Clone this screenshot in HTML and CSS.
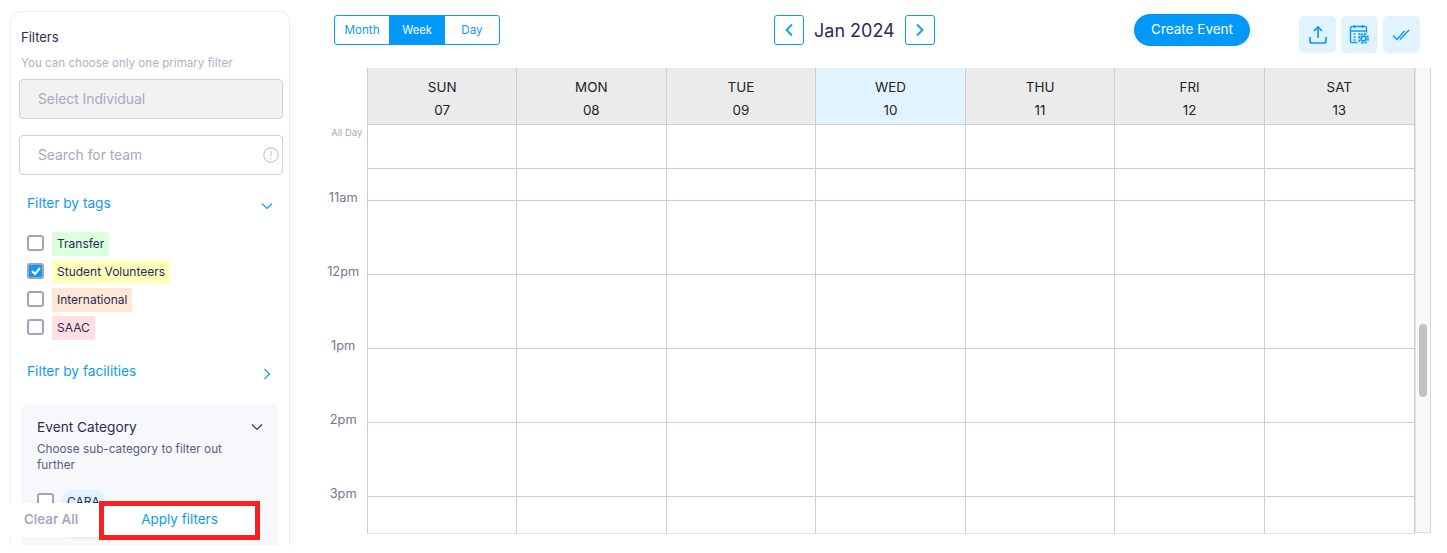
FILE: index.html
```html
<!DOCTYPE html>
<html lang="en">
<head>
    <meta charset="UTF-8">
    <meta name="viewport" content="width=device-width, initial-scale=1.0">
    <title>Calendar</title>
    <link rel="stylesheet" href="styles.css">
</head>
<body>
    <div class="page">
        <aside class="sidebar">
            <h2 class="filters-title">Filters</h2>
            <p class="filters-help">You can choose only one primary filter</p>
            <div class="field field-disabled">Select Individual</div>
            <div class="field">
                Search for team
                <svg class="field-icon" width="16" height="16" viewBox="0 0 16 16" fill="none" stroke="#c9c8d6" stroke-width="1.2"><circle cx="8" cy="8" r="7.2"/><path d="M8 3.8v5.4M8 11v1.2"/></svg>
            </div>

            <div class="section-head section-tags">
                <span>Filter by tags</span>
                <svg width="12" height="8" viewBox="0 0 12 8" fill="none" stroke="#0d9bf5" stroke-width="1.1"><path d="M1 1.500l5 5 5-5"/></svg>
            </div>
            <ul class="tags">
                <li class="tag-row"><span class="check"></span><span class="tag tag-green">Transfer</span></li>
                <li class="tag-row"><span class="check checked"><svg width="12" height="10" viewBox="0 0 12 10" fill="none" stroke="#fff" stroke-width="2"><path d="M2 5l3 3 5-6"/></svg></span><span class="tag tag-yellow">Student Volunteers</span></li>
                <li class="tag-row"><span class="check"></span><span class="tag tag-orange">International</span></li>
                <li class="tag-row"><span class="check"></span><span class="tag tag-pink">SAAC</span></li>
            </ul>

            <div class="section-head section-facilities">
                <span>Filter by facilities</span>
                <svg width="8" height="12" viewBox="0 0 8 12" fill="none" stroke="#0d9bf5" stroke-width="1.1"><path d="M1.500 1l5 5-5 5"/></svg>
            </div>

            <div class="category">
                <div class="category-head">
                    <span>Event Category</span>
                    <svg width="12" height="8" viewBox="0 0 12 8" fill="none" stroke="#2b2b55" stroke-width="1.1"><path d="M1 1.500l5 5 5-5"/></svg>
                </div>
                <p class="category-help">Choose sub-category to filter out further</p>
                <div class="tag-row category-row"><span class="check"></span><span class="tag tag-blue">CARA</span></div>
                <div class="category-pill"></div>
            </div>

            <div class="filter-actions">
                <span class="clear-btn">Clear All</span>
                <span class="apply-btn">Apply filters</span>
            </div>
        </aside>

        <main class="main">
            <div class="toolbar">
                <div class="view-switch">
                    <span>Month</span>
                    <span class="active">Week</span>
                    <span>Day</span>
                </div>
                <div class="month-nav">
                    <span class="nav-btn"><svg width="10" height="16" viewBox="0 0 10 16" fill="none" stroke="#0d9bf5" stroke-width="1.800"><path d="M8 2.500L2.500 8l5.500 5.500"/></svg></span>
                    <span class="month-label">Jan 2024</span>
                    <span class="nav-btn"><svg width="10" height="16" viewBox="0 0 10 16" fill="none" stroke="#0d9bf5" stroke-width="1.800"><path d="M2 2.500L7.500 8 2 13.500"/></svg></span>
                </div>
                <span class="create-btn">Create Event</span>
                <div class="tools">
                    <span class="tool"><svg width="20" height="20" viewBox="0 0 20 20" fill="none" stroke="#0d9bf5" stroke-width="1.700"><path d="M10 13V2.500M6 6l4-4 4 4M2 12v4a2 2 0 0 0 2 2h12a2 2 0 0 0 2-2v-4"/></svg></span>
                    <span class="tool"><svg width="21" height="21" viewBox="0 0 21 21" fill="none" stroke="#0d9bf5" stroke-width="1.500"><path d="M8.500 18.500H3a1.500 1.500 0 0 1-1.500-1.500V4A1.500 1.500 0 0 1 3 2.500h13A1.500 1.500 0 0 1 17.500 4v4.500M1.500 7h16M5.500 1v3M13.500 1v3M4.500 10h2M4.500 13h2M4.500 16h2M9 10h2"/><circle cx="14.500" cy="14.500" r="2.400" stroke-width="1.700"/><circle cx="14.500" cy="14.500" r="4.600" stroke-width="1.900" stroke-dasharray="2.200 1.400"/></svg></span>
                    <span class="tool"><svg width="20" height="14" viewBox="0 0 20 14" fill="none" stroke="#0d9bf5" stroke-width="1.500"><path d="M1 7.500l4 4 7.500-8.500M8 11.500l9-9.500"/></svg></span>
                </div>
            </div>

            <div class="calendar">
                <div class="week">
                    <div class="row row-head">
                        <div class="time"></div>
                        <div class="day">SUN<b>07</b></div>
                        <div class="day">MON<b>08</b></div>
                        <div class="day">TUE<b>09</b></div>
                        <div class="day today">WED<b>10</b></div>
                        <div class="day">THU<b>11</b></div>
                        <div class="day">FRI<b>12</b></div>
                        <div class="day">SAT<b>13</b></div>
                    </div>
                    <div class="row row-allday"><div class="time time-allday">All Day</div><i></i><i></i><i></i><i></i><i></i><i></i><i></i></div>
                    <div class="row row-short"><div class="time"></div><i></i><i></i><i></i><i></i><i></i><i></i><i></i></div>
                    <div class="row"><div class="time">11am</div><i></i><i></i><i></i><i></i><i></i><i></i><i></i></div>
                    <div class="row"><div class="time">12pm</div><i></i><i></i><i></i><i></i><i></i><i></i><i></i></div>
                    <div class="row"><div class="time">1pm</div><i></i><i></i><i></i><i></i><i></i><i></i><i></i></div>
                    <div class="row"><div class="time">2pm</div><i></i><i></i><i></i><i></i><i></i><i></i><i></i></div>
                    <div class="row row-last"><div class="time">3pm</div><i></i><i></i><i></i><i></i><i></i><i></i><i></i></div>
                </div>
                <div class="rail"><div class="thumb"></div></div>
            </div>
        </main>
    </div>
</body>
</html>
```

FILE: styles.css
```css
* {
    box-sizing: border-box;
}
body {
    margin: 0;
    font-family: 'Inter', 'Open Sans', sans-serif;
    background-color: white;
    color: #2b2b55;
}
.page {
    display: flex;
    height: 553px;
    overflow: hidden;
}

/* sidebar */
.sidebar {
    position: relative;
    flex: 0 0 280px;
    height: 534px;
    margin: 11px 0 0 10px;
    padding: 0 6px 0 8px;
    border: 1px solid #eee;
    border-bottom: none;
    border-radius: 10px 10px 0 0;
}
.filters-title {
    margin: 16px 0 0 2px;
    font-size: 13px;
    font-weight: 400;
    line-height: 18px;
}
.filters-help {
    margin: 9px 0 8px 2px;
    font-size: 11.600px;
    line-height: 16px;
    color: #b3b1c7;
}
.field {
    position: relative;
    height: 40px;
    margin-bottom: 16px;
    padding-left: 18px;
    border: 1px solid #cfcfd6;
    border-radius: 4px;
    font-size: 13.800px;
    line-height: 38px;
    color: #a9a8bd;
}
.field-disabled {
    background-color: #f2f2f2;
}
.field-icon {
    position: absolute;
    right: 3px;
    top: 11px;
}
.section-head {
    display: flex;
    justify-content: space-between;
    align-items: center;
    padding: 0 10px 0 8px;
    font-size: 13.700px;
    color: #0d9bf5;
}
.section-head svg {
    margin-top: 5px;
}
.section-tags {
    margin-top: 18px;
    height: 20px;
}
.section-facilities {
    margin-top: 21px;
    height: 20px;
    padding-right: 12px;
}
.tags {
    list-style: none;
    margin: 19px 0 0;
    padding: 0 0 0 8px;
}
.tag-row {
    display: flex;
    align-items: center;
    gap: 8px;
    height: 24px;
    margin-bottom: 4px;
}
.check {
    display: flex;
    align-items: center;
    justify-content: center;
    width: 17px;
    height: 16px;
    margin-bottom: 2px;
    border: 2px solid #a3a2b8;
    border-radius: 3px;
    background-color: white;
}
.checked {
    background-color: #0d9bf5;
}
.tag {
    padding: 0 5px;
    font-size: 12px;
    line-height: 24px;
    color: #2b2b55;
}
.tag-green { background-color: #dcffdc; }
.tag-yellow { background-color: #ffffbe; }
.tag-orange { background-color: #ffe9d6; }
.tag-pink { background-color: #ffdfe2; }
.tag-blue {
    background-color: #e0f2fe;
    border-radius: 10px;
}
.category {
    height: 142px;
    margin: 22px 4px 0 2px;
    padding: 14px 16px 0;
    background-color: #f7f8fb;
    border-radius: 8px 8px 0 0;
}
.category-head {
    display: flex;
    justify-content: space-between;
    align-items: center;
    font-size: 13.700px;
    line-height: 20px;
}
.category-help {
    margin: 4px 24px 0 0;
    font-size: 11.750px;
    line-height: 16px;
    color: #5c5c80;
}
.category-row {
    margin-top: 17px;
}
.category-pill {
    width: 46px;
    height: 21px;
    margin: 3px 0 0 27px;
    background-color: #ececec;
    border-radius: 10px;
}
.filter-actions {
    position: absolute;
    left: -11px;
    top: 489px;
    display: flex;
    align-items: center;
    width: 260px;
    height: 39px;
}
.filter-actions::before {
    content: "";
    position: absolute;
    left: 0;
    top: 2px;
    width: 100%;
    height: 34px;
    background-color: white;
}
.clear-btn {
    position: relative;
    width: 99px;
    margin-bottom: 3px;
    padding-left: 24px;
    font-size: 13.300px;
    font-weight: 600;
    color: #a9a8bd;
}
.apply-btn {
    position: relative;
    width: 161px;
    height: 39px;
    border: 5px solid #fb1f1f;
    background-color: white;
    text-align: center;
    font-size: 13.500px;
    line-height: 26px;
    color: #0d9bf5;
}

/* toolbar */
.main {
    flex: 1;
    min-width: 0;
}
.toolbar {
    display: flex;
    align-items: flex-start;
    height: 68px;
    padding: 14px 0 0 44px;
}
.view-switch {
    display: flex;
    width: 166px;
    height: 30px;
    margin-top: 1px;
    border: 1px solid #0d9bf5;
    border-radius: 3px;
    overflow: hidden;
}
.view-switch span {
    width: 54px;
    text-align: center;
    font-size: 11.700px;
    line-height: 28px;
    color: #0d9bf5;
}
.view-switch .active {
    width: 56px;
    background-color: #0099fa;
    font-size: 11.200px;
    color: white;
}
.month-nav {
    display: flex;
    align-items: center;
    gap: 10px;
    margin: 1px 0 0 274px;
}
.nav-btn {
    display: flex;
    align-items: center;
    justify-content: center;
    width: 30px;
    height: 30px;
    border: 1px solid #0d9bf5;
    border-radius: 3px;
}
.month-label {
    width: 81px;
    font-size: 18px;
    white-space: nowrap;
}
.create-btn {
    width: 116px;
    height: 32px;
    margin-left: 199px;
    background-color: #0099fa;
    border-radius: 16px;
    text-align: center;
    font-size: 13.500px;
    line-height: 30px;
    color: white;
}
.tools {
    display: flex;
    gap: 5px;
    margin: 2px 0 0 49px;
}
.tool {
    display: flex;
    align-items: center;
    justify-content: center;
    width: 37px;
    height: 37px;
    background-color: #e0f3ff;
    border-radius: 5px;
}

/* week grid */
.calendar {
    display: flex;
    width: 1141px;
    height: 465px;
}
.week {
    flex: 1;
}
.row {
    display: flex;
    height: 74px;
}
.row > i,
.day {
    flex: 0 0 149.600px;
    border-right: 1px solid #cfcbdc;
    border-bottom: 1px solid #cfcbdc;
}
.row > i:nth-child(2),
.day:nth-child(2) {
    border-left: 1px solid #cfcbdc;
}
.time {
    flex: 0 0 77.400px;
    margin-top: -11px;
    padding: 0 4px 0 33px;
    text-align: center;
    font-size: 12.800px;
    line-height: 16px;
    color: #77768f;
}
.time-allday {
    margin-top: 2px;
    padding: 0 5px 0 0;
    text-align: right;
    font-size: 9.500px;
    line-height: 12px;
    color: #a9a8bd;
}
.row-head {
    height: 57px;
}
.row-allday {
    height: 44px;
}
.row-short {
    height: 32px;
}
.row-last {
    height: 37px;
}
.row-last > i {
    border-bottom-color: #ddd;
}
.day {
    background-color: #ebebeb;
    padding-top: 11px;
    text-align: center;
    font-size: 13.400px;
    line-height: 16px;
    color: #222;
}
.day b {
    display: block;
    margin-top: 7px;
    font-weight: 400;
}
.today {
    background-color: #e0f3ff;
}
.rail {
    flex: 0 0 16px;
    height: 465px;
    padding: 256px 0 0 3px;
    background-color: #f8f8f8;
    border-left: 1px solid #e5e5e5;
    border-right: 1px solid #d6d3e0;
    border-bottom: 1px solid #ddd;
}
.thumb {
    width: 8px;
    height: 73px;
    background-color: #c1c1c1;
    border-radius: 4px;
}
```
